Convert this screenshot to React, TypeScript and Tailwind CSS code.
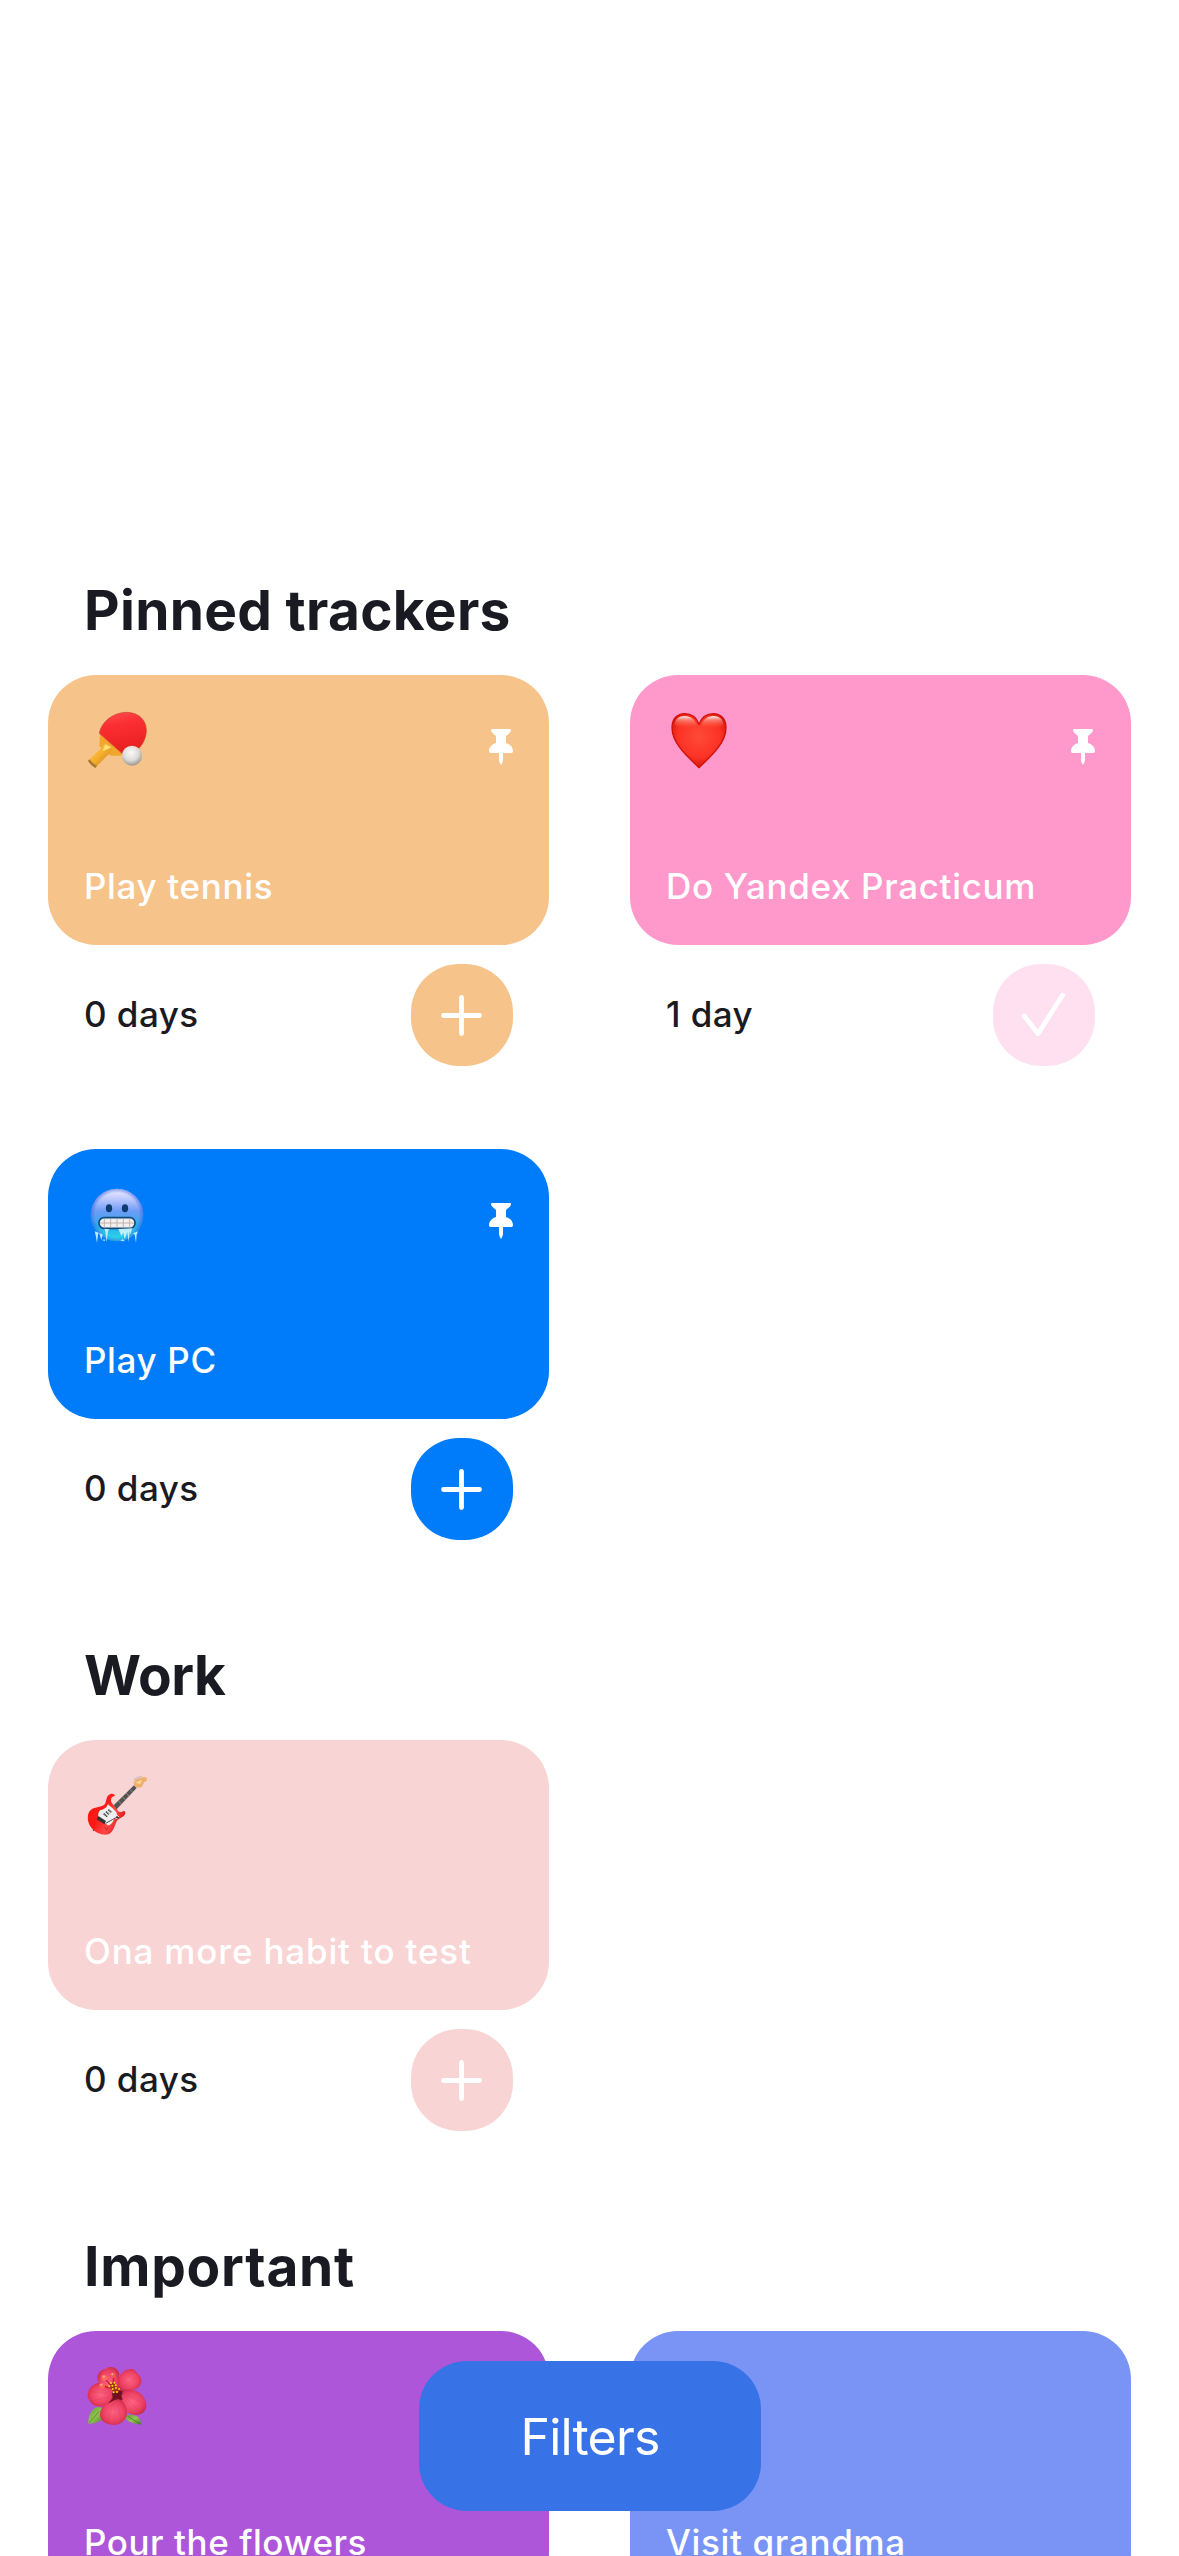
import type { ReactNode } from "react";

function Paddle() {
  return (
    <svg viewBox="42 63 216 216" className="size-[72px]">
      <defs>
        <linearGradient id="paddle-red" x1="0" y1="0" x2="0.2" y2="1">
          <stop offset="0" stopColor="#ff5050" />
          <stop offset="0.35" stopColor="#fb2f33" />
          <stop offset="1" stopColor="#e8201f" />
        </linearGradient>
        <linearGradient id="paddle-wood" x1="0" y1="0" x2="1" y2="1">
          <stop offset="0" stopColor="#ffd24a" />
          <stop offset="0.5" stopColor="#f5ad2c" />
          <stop offset="1" stopColor="#b8741c" />
        </linearGradient>
        <radialGradient id="paddle-ball" cx="0.45" cy="0.35" r="0.65">
          <stop offset="0" stopColor="#fafaf8" />
          <stop offset="0.6" stopColor="#dddbd7" />
          <stop offset="1" stopColor="#9b9590" />
        </radialGradient>
      </defs>
      <path d="M90 132 L158 192 L152 197 L122 197 L88 168 Z" fill="#f3a62c" />
      <path d="M88 130 C94 96 128 68 170 67 C208 68 230 92 229 124 C227 150 215 166 206 176 L158 192 Z" fill="url(#paddle-red)" stroke="#c9442f" strokeWidth="2" />
      <path d="M104 161 L127 172 L123 185 L76 233 Q62 228 54 212 L88 180 Z" fill="url(#paddle-wood)" />
      <path d="M106 163 L124 172 L98 184 Z" fill="#ffe07a" />
      <path d="M54 212 Q60 225 76 234 L81 228 Q68 221 59 208 Z" fill="#a87838" />
      <circle cx="186" cy="197" r="30" fill="url(#paddle-ball)" />
    </svg>
  );
}

function Heart() {
  return (
    <svg viewBox="48 63 216 216" className="size-[72px]">
      <defs>
        <radialGradient id="heart-fill" cx="0.5" cy="0.42" r="0.65">
          <stop offset="0" stopColor="#ff4a38" />
          <stop offset="0.6" stopColor="#fb3325" />
          <stop offset="1" stopColor="#c80c04" />
        </radialGradient>
        <linearGradient id="heart-shine" x1="0" y1="0" x2="0" y2="1">
          <stop offset="0" stopColor="#fff" stopOpacity="0.95" />
          <stop offset="0.35" stopColor="#ffc0b0" stopOpacity="0.5" />
          <stop offset="1" stopColor="#ff5a40" stopOpacity="0" />
        </linearGradient>
      </defs>
      <path d="M147 233 C118 204 66 162 66 113 C66 86 82 71 104 71 C126 71 140 84 147 103 C154 84 169 71 190 71 C212 71 228 86 228 113 C228 162 176 204 147 233 Z" fill="url(#heart-fill)" stroke="#cf1109" strokeWidth="4" strokeLinejoin="round" />
      <path d="M74 104 C75 88 87 78 104 78 C122 78 135 90 141 107 C126 114 90 122 74 104 Z" fill="url(#heart-shine)" />
      <path d="M220 104 C219 88 207 78 190 78 C172 78 159 90 153 107 C168 114 204 122 220 104 Z" fill="url(#heart-shine)" />
    </svg>
  );
}

function ColdFace() {
  return (
    <svg viewBox="42 45 216 216" className="size-[72px]">
      <defs>
        <linearGradient id="cold-fill" x1="0" y1="0" x2="0" y2="1">
          <stop offset="0" stopColor="#f0f0ff" />
          <stop offset="0.2" stopColor="#bcc8fc" />
          <stop offset="0.42" stopColor="#6f9cf6" />
          <stop offset="0.7" stopColor="#2fa8ee" />
          <stop offset="1" stopColor="#28e0e6" />
        </linearGradient>
        <radialGradient id="cold-rim" cx="0.5" cy="0.5" r="0.5">
          <stop offset="0.84" stopColor="#3d5ce0" stopOpacity="0" />
          <stop offset="1" stopColor="#2e65e0" stopOpacity="0.6" />
        </radialGradient>
      </defs>
      <circle cx="141" cy="135" r="79" fill="url(#cold-fill)" />
      <circle cx="141" cy="135" r="79" fill="url(#cold-rim)" />
      <ellipse cx="117" cy="115" rx="9.5" ry="12" fill="#0d3c73" />
      <ellipse cx="165" cy="115" rx="9.5" ry="12" fill="#0d3c73" />
      <rect x="87" y="143" width="108" height="32" rx="15" fill="#f3efee" stroke="#104b7c" strokeWidth="5" />
      <path d="M90 159 H192 M103 146 V172 M122 146 V172 M141 146 V172 M160 146 V172 M179 146 V172" stroke="#b9a8a4" strokeWidth="2.5" />
      <path d="M74 184 L86 188 L84 194 L81 219 L77 196 Z M88 190 L98 193 L94 211 Z M103 176 L118 178 L114 184 L110 217 L106 184 Z M145 177 L188 175 L184 183 L182 194 L179 184 L176 216 L172 186 L164 208 L160 188 L154 198 Z M189 190 L204 184 L200 194 L198 219 L194 194 Z" fill="#c9f3fb" opacity="0.92" />
      <path d="M97 211 L103 207 L106 214 Z M151 213 L158 207 L165 214 Z" fill="#a9e7f4" />
    </svg>
  );
}

function Guitar() {
  return (
    <svg viewBox="42 48 216 216" className="size-[72px]">
      <defs>
        <linearGradient id="guitar-body" x1="0" y1="0" x2="1" y2="0.6">
          <stop offset="0" stopColor="#ff1a12" />
          <stop offset="0.45" stopColor="#fb1a16" />
          <stop offset="0.75" stopColor="#ff4a4a" />
          <stop offset="1" stopColor="#d90d0d" />
        </linearGradient>
      </defs>
      <path d="M73 204 L70 213 M77 208 L75 212" stroke="#5d5353" strokeWidth="4" />
      <path d="M135 107 C133 100 122 99 115 106 C108 113 110 125 104 133 C96 142 76 140 62 150 C50 160 51 186 63 202 C76 219 98 228 115 223 C130 217 134 196 141 182 C147 174 163 173 166 160 C167 153 161 151 156 155 C149 158 143 154 141 147 L128 132 C121 125 122 115 127 111 Z" fill="url(#guitar-body)" />
      <path d="M114 133 L131 148 L139 157 Q139 165 148 171 Q142 177 132 178 Q125 196 113 196 Q97 184 84 171 Q82 160 90 151 Q108 148 114 133 Z" fill="#edf0ee" />
      <path d="M131 136 L192 76 L200 84 L140 148 Z" fill="#555452" />
      <path d="M145 122 L155 133 M157 110 L167 121 M168 99 L178 109 M179 88 L189 98" stroke="#aaa49c" strokeWidth="2" />
      <path d="M191 72 C190 62 200 57 211 54 L222 51 L231 54 L230 63 L222 67 L217 79 C212 85 203 83 196 80 Z" fill="#efb06c" />
      <path d="M195 68 L216 60 L211 72 Z" fill="#ffd7a0" />
      <path d="M191 59 L214 48 M195 54 L199 59 M202 50 L207 56 M211 47 L216 53" stroke="#c1b9b5" strokeWidth="3" />
      <path d="M115 149 L124 157 M108 155 L117 163 M101 161 L112 170" stroke="#454545" strokeWidth="5" strokeDasharray="4 1" />
      <path d="M85 168 L108 183 L103 193 L80 178 Z" fill="#353535" />
      <path d="M107 190 L127 179 L143 170" stroke="#505050" strokeWidth="3" fill="none" />
      <path d="M139 170 L146 174" stroke="#333" strokeWidth="4" />
      <path d="M104 200 L110 211 M115 200 L109 211" stroke="#a12321" strokeWidth="2" />
    </svg>
  );
}

function Hibiscus() {
  return (
    <svg viewBox="42 51 216 216" className="size-[72px]">
      <defs>
        <radialGradient id="petal" cx="0.5" cy="0.5" r="0.6">
          <stop offset="0" stopColor="#fd6482" />
          <stop offset="0.6" stopColor="#ee4263" />
          <stop offset="1" stopColor="#c42545" />
        </radialGradient>
        <linearGradient id="leaf" x1="0" y1="0" x2="1" y2="1">
          <stop offset="0" stopColor="#669b35" />
          <stop offset="0.5" stopColor="#94c251" />
          <stop offset="1" stopColor="#48792a" />
        </linearGradient>
      </defs>
      <path d="M87 170 C63 174 54 196 55 221 C76 221 91 212 101 207 L105 180 Z" fill="url(#leaf)" />
      <path d="M57 219 L88 184" stroke="#3e7130" strokeWidth="2" />
      <path d="M165 198 C186 190 211 194 214 224 C194 223 180 218 168 208 Z" fill="url(#leaf)" />
      <path d="M175 200 L212 223" stroke="#3e7130" strokeWidth="2" />
      <path d="M110 100 L160 100 L175 150 L165 195 L105 180 L100 140 Z" fill="#8d1830" />
      <path d="M90 104 C74 87 82 60 108 56 C121 45 144 52 148 73 L145 110 L131 148 Z" fill="url(#petal)" />
      <path d="M144 111 C139 83 157 57 184 57 C196 58 201 69 208 76 C220 91 214 110 199 116 C181 124 166 116 150 125 Z" fill="url(#petal)" />
      <path d="M89 98 C66 101 53 117 53 137 C57 162 78 174 103 168 C116 164 127 151 133 140 C122 123 113 102 89 98 Z" fill="url(#petal)" />
      <path d="M158 124 C174 113 202 119 216 135 C234 156 234 181 214 191 C198 199 177 194 168 180 C160 168 158 146 143 138 Z" fill="url(#petal)" />
      <path d="M132 151 C110 154 90 171 90 195 C91 214 111 225 133 225 C157 224 173 205 171 184 C169 163 158 151 145 147 Z" fill="url(#petal)" />
      <path d="M126 128 L153 122 Q161 126 154 137 L158 150 L141 146 L124 155 L114 161 L128 144 Z" fill="#721022" />
      <path d="M105 86 L126 111 M131 80 L129 110 M98 107 L124 116" stroke="#c71d38" strokeWidth="4" />
      <circle cx="103" cy="83" r="9" fill="#ff6b5d" />
      <circle cx="129" cy="76" r="9" fill="#f75350" />
      <circle cx="96" cy="107" r="9" fill="#f9625a" />
      <g fill="#ffb1a1">
        <circle cx="101" cy="80" r="3" />
        <circle cx="127" cy="73" r="3" />
        <circle cx="94" cy="104" r="3" />
      </g>
      <path d="M122 100 L133 97 L143 114 L147 126 L130 128 L119 110 Z" fill="#a33018" />
      <g fill="#ffdb00">
        <circle cx="123" cy="99" r="3" />
        <circle cx="133" cy="98" r="3" />
        <circle cx="118" cy="109" r="3" />
        <circle cx="127" cy="107" r="3" />
        <circle cx="137" cy="106" r="3" />
        <circle cx="128" cy="117" r="3" />
        <circle cx="138" cy="114" r="3" />
        <circle cx="147" cy="117" r="3" />
        <circle cx="131" cy="127" r="3" />
        <circle cx="141" cy="126" r="3" />
      </g>
      <g stroke="#ac193b" strokeWidth="1.5" opacity="0.25" fill="none">
        <path d="M128 160 L113 215 M135 159 L133 221 M143 158 L153 215 M164 139 L204 181 M170 134 L218 160 M116 142 L68 152 M112 130 L64 125 M160 110 L196 84" />
      </g>
    </svg>
  );
}

function Pin() {
  return (
    <svg viewBox="57 57 72 108" className="mt-[18px] h-9 w-6" fill="#fff">
      <path d="M66 57 H120 Q123 57 123 60 C123 67 117 70 108 78 V99 C121 103 129 112 129 124 Q129 129 124 129 H99 V147 C99 156 96 160 93 165 C90 160 87 156 87 147 V129 H62 Q57 129 57 124 C57 112 65 103 78 99 V78 C69 70 63 67 63 60 Q63 57 66 57 Z" />
    </svg>
  );
}

type TrackerProps = {
  name: string;
  days: string;
  emoji?: ReactNode;
  cardColor: string;
  buttonColor: string;
  nameTracking?: string;
  pinned?: boolean;
  done?: boolean;
};

function Tracker({ name, days, emoji, cardColor, buttonColor, nameTracking = "tracking-[0.66px]", pinned, done }: TrackerProps) {
  return (
    <article className="h-[444px] w-[501px]">
      <div className={`flex h-[270px] flex-col justify-between rounded-[48px] px-9 pt-9 pb-8 ${cardColor}`}>
        <div className="flex h-[72px] items-start justify-between">
          {emoji}
          {pinned && <Pin />}
        </div>
        <p className={`text-[35px] leading-[54px] font-medium whitespace-nowrap text-white ${nameTracking}`}>{name}</p>
      </div>
      <div className="mt-[19px] flex h-[102px] items-center justify-between px-9">
        <span className="pb-0.5 text-[35px] leading-[54px] font-medium tracking-[0.45px] text-[#1a1b22]">{days}</span>
        <button aria-label={done ? "Completed" : "Complete"} className={`size-[102px] rounded-[48px] ${buttonColor}`}>
          <svg viewBox="0 0 102 102" className="size-full" fill="none" stroke="#fff" strokeWidth="4.8" strokeLinecap="round" strokeLinejoin="round">
            {done ? <path d="M31.3 52 L45 69.7 L69.5 31.3" /> : <path d="M32.5 51.5 H68.5 M50.5 33.5 V69.5" />}
          </svg>
        </button>
      </div>
    </article>
  );
}

function Section({ title, tracking, children }: { title: string; tracking: string; children: ReactNode }) {
  return (
    <section>
      <h2 className={`h-[98px] pl-9 text-[55px] leading-[66px] font-bold text-[#1a1b22] ${tracking}`}>{title}</h2>
      <div className="grid grid-cols-2 gap-x-[81px] gap-y-[30px]">{children}</div>
    </section>
  );
}

export default function App() {
  return (
    <main className="relative h-[2556px] w-[1179px] overflow-hidden bg-white font-['Inter',sans-serif]">
      <div className="flex flex-col gap-[49px] px-12 pt-[577px]">
        <Section title="Pinned trackers" tracking="tracking-[0.3px]">
          <Tracker name="Play tennis" days="0 days" emoji={<Paddle />} cardColor="bg-[#f6c48b]" buttonColor="bg-[#f6c48b]" pinned />
          <Tracker name="Do Yandex Practicum" days="1 day" emoji={<Heart />} cardColor="bg-[#ff99cc]" buttonColor="bg-[#ffe0f0]" pinned done />
          <Tracker name="Play PC" days="0 days" emoji={<ColdFace />} cardColor="bg-[#007bfa]" buttonColor="bg-[#007bfa]" pinned />
        </Section>
        <Section title="Work" tracking="tracking-[-0.4px]">
          <Tracker name="Ona more habit to test" days="0 days" emoji={<Guitar />} cardColor="bg-[#f9d4d4]" buttonColor="bg-[#f9d4d4]" nameTracking="tracking-[0.82px]" />
        </Section>
        <Section title="Important" tracking="tracking-[0.75px]">
          <Tracker name="Pour the flowers" days="0 days" emoji={<Hibiscus />} cardColor="bg-[#ad56da]" buttonColor="bg-[#ad56da]" nameTracking="tracking-[0.55px]" />
          <Tracker name="Visit grandma" days="0 days" cardColor="bg-[#7994f5]" buttonColor="bg-[#7994f5]" />
        </Section>
      </div>
      <button className="absolute top-[2361px] left-[419px] h-[150px] w-[342px] rounded-[48px] bg-[#3772e7] pt-0.5 text-[50px] tracking-[-0.8px] text-white">
        Filters
      </button>
    </main>
  );
}
